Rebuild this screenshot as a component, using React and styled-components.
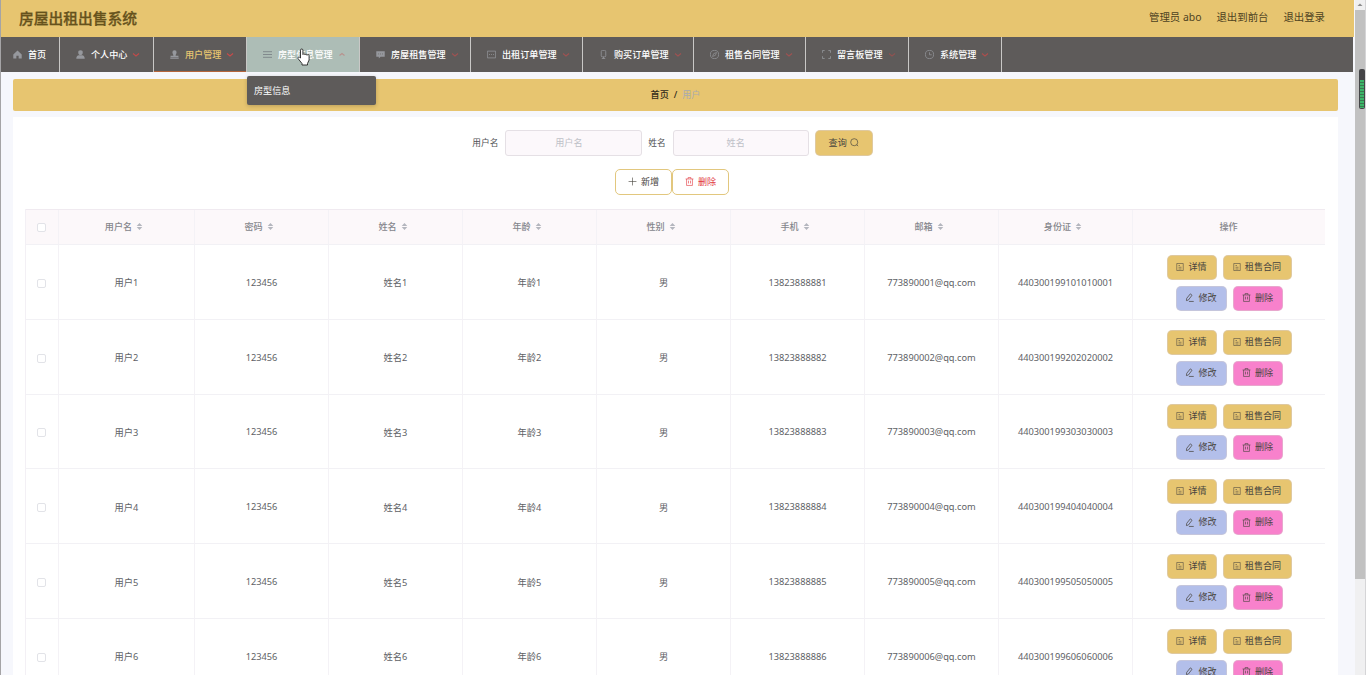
import styled, { createGlobalStyle } from 'styled-components'

const GlobalStyle = createGlobalStyle`
* {
  box-sizing: border-box;
}
html, body {
  margin: 0;
  height: 675px;
  overflow: hidden;
}
body {
  font-family: "Noto Sans", "Noto Sans CJK SC", sans-serif;
  font-size: 9.1px;
  color: #606266;
  background: #f6f7fc;
}
`

const Page = styled.div`
  display: flex;
  width: 1366px;
  height: 675px;
  overflow: hidden;
  border-left: 1px solid #a5a4a6;
`
const Main = styled.div`
  width: 1354px;
  height: 675px;
  overflow: hidden;
`
const Header = styled.header`
  display: flex;
  align-items: center;
  justify-content: space-between;
  width: 1353px;
  height: 37px;
  padding: 0 29px 2px 18px;
  background: #e7c570;
  color: #4d421f;
`
const Title = styled.h1`
  margin: 0;
  font-size: 14.75px;
  line-height: 20px;
  font-weight: 500;
  color: #66521c;
  -webkit-text-stroke: 0.3px #66521c;
`
const HeaderLinks = styled.div`
  display: flex;
  gap: 15px;
  margin-top: -1px;
  font-size: 10.4px;
  line-height: 16px;
`
const Nav = styled.nav`
  display: flex;
  width: 1352px;
  height: 35px;
  background: #5e5b5a;
`
const NavItem = styled.div`
  position: relative;
  display: flex;
  align-items: center;
  width: ${p => p.$width}px;
  height: 35px;
  padding-left: ${p => p.$pad || 16}px;
  border-right: 1px solid #c9c8c6;
  box-shadow: ${p => (p.$active ? 'inset 0 -1px #b5653c' : 'none')};
  background: ${p => (p.$hover ? '#adbdb6' : 'transparent')};
  color: ${p => (p.$active ? '#e7c570' : '#fff')};
  font-weight: 500;
  white-space: nowrap;
  svg {
    flex: none;
    color: ${p => (p.$hover ? '#7f878b' : '#96989d')};
  }
`
const NavText = styled.span`
  margin: 0 5px 0 6px;
  line-height: 14px;
  letter-spacing: 0.02px;
`
const SubMenu = styled.div`
  position: absolute;
  z-index: 3;
  top: 39px;
  left: 0;
  display: flex;
  align-items: center;
  width: 129px;
  height: 29px;
  padding: 0 0 1px 7px;
  border-radius: 2px;
  background: #5e5b5a;
  color: #fff;
  font-weight: 400;
  box-shadow: 0 1px 4px rgba(0, 0, 0, 0.2);
`
const Cursor = styled.svg`
  position: absolute;
  z-index: 4;
  top: 11px;
  left: 50px;
`
const Breadcrumb = styled.div`
  display: flex;
  align-items: center;
  justify-content: center;
  gap: 5px;
  width: 1325px;
  height: 32px;
  margin: 7px 0 6px 12px;
  padding-bottom: 2px;
  border-radius: 2px;
  background: #e7c570;
  color: #302b1b;
  font-weight: 500;
`
const Current = styled.span`
  color: #a9abad;
  font-weight: 400;
`
const Card = styled.div`
  width: 1325px;
  height: 570px;
  margin-left: 12px;
  padding: 13px 13px 0 12px;
  background: #fff;
`
const SearchBar = styled.div`
  display: flex;
  align-items: center;
  justify-content: center;
  height: 26px;
  padding-right: 5px;
`
const Label = styled.label`
  margin: -1px 7px 0 0;
  color: #505154;
  font-size: 8.7px;
`
const Input = styled.input`
  width: ${p => p.$width}px;
  height: 26px;
  margin-right: 6px;
  padding: 0 10px 2px 0;
  border: 1px solid #e5e0e5;
  border-radius: 3px;
  outline: none;
  background: #fcf8fb;
  font-family: inherit;
  font-size: 9.1px;
  text-align: center;
  &::placeholder {
    color: #bfc1c8;
    opacity: 1;
  }
`
const Button = styled.button`
  display: flex;
  flex: none;
  align-items: center;
  justify-content: center;
  gap: ${p => p.$gap || 4}px;
  width: ${p => p.$width}px;
  height: ${p => p.$height || 25}px;
  padding: 0 0 1px;
  border: 1px solid ${p => p.$border || 'rgba(215, 205, 205, 0.5)'};
  border-radius: 5px;
  background: ${p => p.$bg || '#fff'};
  color: ${p => p.$color || '#48443e'};
  font-family: inherit;
  font-size: 9.1px;
  line-height: 14px;
  white-space: nowrap;
`
const Tools = styled.div`
  display: flex;
  justify-content: center;
  margin: 13px 0 14px;
  padding-right: 6px;
`
const Table = styled.div`
  width: 1300px;
  border-left: 1px solid #f3f0f5;
`
const Row = styled.div`
  display: grid;
  grid-template-columns: 33px 136px repeat(7, 134px) 192px;
  height: ${p => (p.$head ? 36 : 74.8)}px;
  background: ${p => (p.$head ? '#fcf8fa' : '#fff')};
  border-top: ${p => (p.$head ? '1px solid #f0eaf0' : 'none')};
`
const Cell = styled.div`
  display: flex;
  align-items: center;
  justify-content: center;
  gap: 4px;
  padding: ${p => (p.$head ? `0 ${p.$sortable ? 5 : 1}px 2px 0` : '1px 0 0')};
  border-right: 1px solid #f4f2f6;
  border-bottom: 1px solid #f2f1f5;
  color: ${p => (p.$head ? '#85868c' : '#606266')};
  font-size: ${p => (p.$head ? 9.1 : 9.25)}px;
  font-weight: ${p => (p.$head ? 500 : 400)};
  &:last-child {
    border-right: none;
  }
`
const CheckBox = styled.span`
  width: 9px;
  height: 9px;
  margin: 2px 1px 0 0;
  border: 1px solid #e2e3e8;
  border-radius: 2px;
  background: #fff;
`
const Actions = styled(Cell)`
  flex-wrap: wrap;
  align-content: center;
  gap: 6px;
  padding: 2px 28px 0;
`
const ScrollBar = styled.div`
  display: flex;
  flex-direction: column;
  position: relative;
  width: 11px;
  height: 675px;
  background: #f0f0f1;
  border-right: 1px solid #d5d5d7;
`
const ScrollArrow = styled.svg`
  width: 10px;
  height: 10px;
`
const Thumb = styled.div`
  width: 10px;
  height: 569px;
  background: #c1c1c1;
`
const Meter = styled.div`
  position: absolute;
  top: 69px;
  left: 4px;
  width: 6px;
  height: 40px;
  padding: 11px 1px 1px;
  border-radius: 2px;
  background: #444447;
`
const MeterBars = styled.div`
  height: 28px;
  background: repeating-linear-gradient(#3bb568 0 2px, #397a50 2px 3px);
`

const shapes = {
  home: <path fill="currentColor" d="M8 1L15.5 8V15H10V10H6V15H0.500V8Z" />,
  person: <path fill="currentColor" d="M8 .5a4 4 0 0 1 4 4.300C12 7 10 9 8 9S4 7 4 4.800A4 4 0 0 1 8 .5ZM.5 15.500c0-4 2-5.500 4.500-6h6c2.500.5 4.500 2 4.500 6Z" />,
  stamp: <path fill="currentColor" d="M8 .5a3.700 3.700 0 0 1 3.700 4c0 2-1.700 3-1.700 5.500H15v2.500H1V10h5c0-2.500-1.700-3.500-1.700-5.500A3.700 3.700 0 0 1 8 .5ZM.5 13.500h15v2H.5Z" />,
  menu: <path stroke="currentColor" strokeWidth="1.7" d="M0 3h16M0 8h16M0 13h16" />,
  chat: (
    <>
      <path fill="currentColor" d="M.5 2h15v10H8l-3 3v-3H.5Z" />
      <path stroke="#5e5b5a" strokeWidth="1.2" strokeDasharray="1.6 2" d="M3.500 7h9" />
    </>
  ),
  message: (
    <>
      <path fill="none" stroke="currentColor" strokeWidth="1.3" d="M.7 2h14.600v12H.7Z" />
      <path stroke="currentColor" strokeWidth="1.5" strokeDasharray="1.5 2" d="M3.800 8h9" />
    </>
  ),
  mobile: (
    <>
      <rect x="4" y="0.7" width="8" height="11.5" rx="2" fill="none" stroke="currentColor" strokeWidth="1.4" />
      <path stroke="currentColor" strokeWidth="1.4" d="M8 12v3M5 15.200h6" />
    </>
  ),
  compass: (
    <>
      <circle cx="8" cy="8" r="7.3" fill="none" stroke="currentColor" strokeWidth="1.3" />
      <path fill="none" stroke="currentColor" strokeWidth="1.2" d="m11.500 4.500-2 5-5 2 2-5Z" />
    </>
  ),
  scan: <path fill="none" stroke="currentColor" strokeWidth="1.5" d="M.7 5V1h4M11.300 1h4v4M15.300 11v4h-4M4.700 15h-4v-4" />,
  clock: (
    <>
      <circle cx="8" cy="8" r="7.3" fill="none" stroke="currentColor" strokeWidth="1.3" />
      <path fill="none" stroke="currentColor" strokeWidth="1.3" d="M8 4v4.500h4" />
    </>
  ),
  search: (
    <>
      <circle cx="7.5" cy="7.5" r="6.3" fill="none" stroke="currentColor" strokeWidth="1.2" />
      <path stroke="currentColor" strokeWidth="1.2" d="m12 12 2.500 2.500" />
    </>
  ),
  plus: <path stroke="currentColor" strokeWidth="1.1" d="M8 1v14M1 8h14" />,
  trash: <path fill="none" stroke="currentColor" strokeWidth="1.1" d="M1 3.500h14M5.500 3.500V1h5v2.500M2.800 3.500V15h10.400V3.500M6.200 6.500v5M9.800 6.500v5" />,
  doc: <path fill="none" stroke="currentColor" strokeWidth="1.1" d="M1.500 1h13v14h-13ZM5 5h3M5 8.500h6M5 12h6" />,
  edit: <path fill="none" stroke="currentColor" strokeWidth="1.3" d="M9.500 1.500 12.500 4 6 12.500 2.500 13.500l.5-4ZM7 15h8.500" />,
}

function Icon({ name, size = 9 }) {
  return (
    <svg width={size} height={size} viewBox="0 0 16 16">
      {shapes[name]}
    </svg>
  )
}

function Arrow({ up, color }) {
  return (
    <svg width="8" height="8" viewBox="0 0 8 8">
      <path d={up ? 'M1.500 4.500 4 2.500 6.500 4.500' : 'M1 2.500 4 5 7 2.500'} fill="none" stroke={color} strokeWidth="1.1" />
    </svg>
  )
}

function Sort() {
  return (
    <svg width="7" height="9" viewBox="0 0 7 9">
      <path d="M3.500 1 6.300 4H.7ZM3.500 8 6.300 5H.7Z" fill="#b4b6be" />
    </svg>
  )
}

const menus = [
  { text: '个人中心', icon: 'person', width: 94, arrow: '#c04a4a' },
  { text: '用户管理', icon: 'stamp', width: 93, arrow: '#c84a4a', active: true },
  { text: '房型信息管理', icon: 'menu', width: 113, arrow: '#b8928e', hover: true },
  { text: '房屋租售管理', icon: 'chat', width: 111, arrow: '#9e5252' },
  { text: '出租订单管理', icon: 'message', width: 112, arrow: '#9e5252' },
  { text: '购买订单管理', icon: 'mobile', width: 111, arrow: '#9e5252' },
  { text: '租售合同管理', icon: 'compass', width: 112, arrow: '#9e5252' },
  { text: '留言板管理', icon: 'scan', width: 103, arrow: '#8f5251' },
  { text: '系统管理', icon: 'clock', width: 93, arrow: '#ac4e4d' },
]

const columns = ['用户名', '密码', '姓名', '年龄', '性别', '手机', '邮箱', '身份证']

const users = [1, 2, 3, 4, 5, 6].map(n => [
  `用户${n}`,
  '123456',
  `姓名${n}`,
  `年龄${n}`,
  '男',
  `1382388888${n}`,
  `77389000${n}@qq.com`,
  `440300199${n}0${n}0${n}000${n}`,
])

export default function App() {
  return (
    <Page>
      <GlobalStyle />
      <Main>
        <Header>
          <Title>房屋出租出售系统</Title>
          <HeaderLinks>
            <span>管理员 abo</span>
            <span>退出到前台</span>
            <span>退出登录</span>
          </HeaderLinks>
        </Header>
        <Nav>
          <NavItem $width={59} $pad={12}>
            <Icon name="home" />
            <NavText>首页</NavText>
          </NavItem>
          {menus.map(m => (
            <NavItem key={m.text} $width={m.width} $active={m.active} $hover={m.hover}>
              <Icon name={m.icon} />
              <NavText>{m.text}</NavText>
              <Arrow up={m.hover} color={m.arrow} />
              {m.hover && (
                <>
                  <SubMenu>房型信息</SubMenu>
                  <Cursor width="13" height="18" viewBox="0 0 13 18">
                    <path
                      d="M3.500 10V2.200a1.200 1.200 0 0 1 2.400 0V6.500a1.100 1.100 0 0 1 2.100.3 1.100 1.100 0 0 1 2.100.5 1 1 0 0 1 2 .7v4L10.500 15.500V17H5v-1.500L1 10.500c-.5-1 .8-2 1.600-1.200Z"
                      fill="#fff"
                      stroke="#222"
                      strokeWidth="0.9"
                    />
                  </Cursor>
                </>
              )}
            </NavItem>
          ))}
        </Nav>
        <Breadcrumb>
          <span>首页</span>
          <span>/</span>
          <Current>用户</Current>
        </Breadcrumb>
        <Card>
          <SearchBar>
            <Label>用户名</Label>
            <Input $width={137} placeholder="用户名" />
            <Label>姓名</Label>
            <Input $width={136} placeholder="姓名" />
            <Button $width={58} $height={26} $gap={3} $bg="#e7c570">
              查询
              <Icon name="search" />
            </Button>
          </SearchBar>
          <Tools>
            <Button $width={57} $height={26} $border="#e2c77e">
              <Icon name="plus" />
              新增
            </Button>
            <Button $width={57} $height={26} $border="#e2c77e" $color="#e2393f">
              <Icon name="trash" />
              删除
            </Button>
          </Tools>
          <Table>
            <Row $head>
              <Cell $head><CheckBox /></Cell>
              {columns.map(c => (
                <Cell $head $sortable key={c}>
                  {c}
                  <Sort />
                </Cell>
              ))}
              <Cell $head>操作</Cell>
            </Row>
            {users.map(user => (
              <Row key={user[0]}>
                <Cell><CheckBox /></Cell>
                {user.map((value, i) => (
                  <Cell key={i}>{value}</Cell>
                ))}
                <Actions>
                  <Button $width={50} $bg="#e7c570"><Icon name="doc" size={8} />详情</Button>
                  <Button $width={69} $bg="#e7c570"><Icon name="doc" size={8} />租售合同</Button>
                  <Button $width={51} $bg="#b3bfea"><Icon name="edit" />修改</Button>
                  <Button $width={50} $bg="#f881cc"><Icon name="trash" />删除</Button>
                </Actions>
              </Row>
            ))}
          </Table>
        </Card>
      </Main>
      <ScrollBar>
        <ScrollArrow viewBox="0 0 10 10">
          <path d="M2.500 6 5 3.500 7.500 6Z" fill="#8b8b8b" />
        </ScrollArrow>
        <Thumb />
        <Meter>
          <MeterBars />
        </Meter>
      </ScrollBar>
    </Page>
  )
}
